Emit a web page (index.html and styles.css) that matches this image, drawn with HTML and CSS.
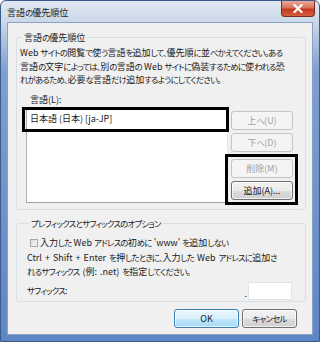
FILE: index.html
```html
<!DOCTYPE html>
<html lang="ja">
<head>
<meta charset="utf-8">
<link rel="stylesheet" href="styles.css">
</head>
<body>
<div class="window">
  <div class="titlebar">
    <span class="title">言語の優先順位</span>
    <span class="close"><svg width="10" height="9" viewBox="0 0 10 9"><path d="M1.5 1 L8.5 8 M8.5 1 L1.5 8" stroke="#fff" stroke-width="2.2" stroke-linecap="square"/></svg></span>
  </div>
  <div class="client">
    <fieldset class="group g1">
      <legend>言語の優先順位</legend>
      <p class="desc">Web サイトの閲覧で使う言語を追加して、優先順に並べかえてください。ある<br>言語の文字によっては、別の言語の Web サイトに偽装するために使われる恐<br>れがあるため、必要な言語だけ追加するようにしてください。</p>
      <div class="langs">
        <div class="listcol">
          <div class="lbl">言語(L):</div>
          <div class="listbox">
            <div class="item">日本語 (日本) [ja-JP]</div>
          </div>
        </div>
        <div class="btncol">
          <button class="btn dis">上へ(U)</button>
          <button class="btn dis">下へ(D)</button>
          <div class="mark">
            <button class="btn dis">削除(M)</button>
            <button class="btn">追加(A)...</button>
          </div>
        </div>
      </div>
    </fieldset>
    <fieldset class="group g2">
      <legend>プレフィックスとサフィックスのオプション</legend>
      <label class="chk"><span class="box"></span><span class="chk-text">入力した Web アドレスの初めに 'www' を追加しない</span></label>
      <p class="desc2">Ctrl + Shift + Enter を押したときに、入力した Web アドレスに追加さ<br>れるサフィックス (例: .net) を指定してください。</p>
      <div class="suffix">
        <span class="suffix-label">サフィックス:</span>
        <span class="dot">.</span>
        <span class="input"></span>
      </div>
    </fieldset>
    <div class="footer">
      <button class="btn ok">OK</button>
      <button class="btn cancel">キャンセル</button>
    </div>
  </div>
</div>
<script src="app.js"></script>
</body>
</html>
```

FILE: styles.css
```css
* { box-sizing: border-box; }
html, body { margin: 0; padding: 0; background: #fff; }
body {
  font-family: "Noto Sans CJK JP", "Noto Sans", sans-serif;
  font-size: 9px;
  color: #1a1a1a;
  font-feature-settings: "palt" 1;
}
.kana { font-size: 8.4px; letter-spacing: -0.75px; }
.window {
  width: 320px;
  height: 342px;
  display: flex;
  flex-direction: column;
  border: 1px solid #3a5a8a;
  border-radius: 6px 6px 0 0;
  background: linear-gradient(to bottom, #dfe7f1 0, #cbd8e8 21px, #7f9fcf 70px, #5f86c4 100%);
  padding: 0 6px 6px 6px;
}
.titlebar {
  height: 21px;
  display: flex;
  align-items: flex-start;
  justify-content: space-between;
}
.title { padding: 5px 0 0 0; line-height: 13px; color: #222; }
.close {
  width: 34px;
  height: 16px;
  margin-right: -2px;
  border: 1px solid #7a2a20;
  border-top: none;
  border-radius: 0 0 4px 4px;
  background: linear-gradient(to bottom, #e9a99b 0, #d9745e 45%, #c2391e 55%, #d45f3f 100%);
  display: flex;
  align-items: center;
  justify-content: center;
}
.client {
  flex: 1;
  background: #f0f0f0;
  border: 1px solid #8aa3c6;
  padding: 8px 6px 0 8px;
  display: flex;
  flex-direction: column;
}
.group {
  margin: 0;
  border: 1px solid #d5dfe5;
  border-radius: 3px;
  padding: 0;
  min-width: 0;
}
.group legend {
  padding: 0 2px;
  margin-left: 2px;
  color: #222;
  line-height: 12px;
}
.g1 { height: 179px; padding: 0 0 0 3px; }
.desc {
  margin: 2px 0 0 0;
  line-height: 13.5px;
  white-space: nowrap;
}
.langs {
  display: flex;
  margin-top: 7px;
  margin-left: 6px;
  gap: 3px;
}
.lbl { padding-left: 4px; line-height: 12px; height: 13px; }
.listbox {
  width: 202px;
  height: 96px;
  background: #fff;
  border: 1px solid #abadb3;
  border-right-color: #e3e9ef;
  border-bottom-color: #a0a0a0;
}
.item {
  margin: -1px -2px 0 -5px;
  height: 25px;
  border: 3px solid #000;
  padding-left: 5px;
  line-height: 17px;
}
.btncol {
  display: flex;
  flex-direction: column;
  padding-top: 17px;
  gap: 3px;
}
.btn {
  font-family: inherit;
  font-size: 9px;
  font-feature-settings: "palt" 1;
  width: 62px;
  height: 19px;
  padding: 0;
  border: 1px solid #707070;
  border-radius: 3px;
  color: #1a1a1a;
  background: linear-gradient(to bottom, #f2f2f2 0, #ebebeb 50%, #dddddd 51%, #cfcfcf 100%);
  box-shadow: inset 0 0 0 1px rgba(255,255,255,0.7);
}
.btn.dis {
  color: #a3a3a3;
  background: #f4f4f4;
  border-color: #c3c6c8;
  box-shadow: none;
}
.mark {
  margin: -1px 0 0 -6px;
  width: 73px;
  border: 3px solid #000;
  padding: 2px 0 2px 3px;
  display: flex;
  flex-direction: column;
  gap: 3px;
}
.g2 { margin-top: 7px; height: 85px; padding: 0 0 0 10px; }
.chk {
  display: flex;
  align-items: center;
  margin-top: 6px;
  margin-left: 3px;
  gap: 2px;
  line-height: 13px;
  white-space: nowrap;
}
.box {
  width: 8px;
  height: 8px;
  border: 1px solid #a8a8a8;
  background: linear-gradient(135deg, #dcdcdc, #f8f8f8);
}
.desc2 {
  margin: 2px 0 0 0;
  line-height: 12.6px;
  white-space: nowrap;
  word-spacing: 1px;
}
.suffix {
  display: flex;
  align-items: center;
  margin-top: 3px;
}
.suffix-label { flex: 1; }
.dot { margin-right: 1px; padding-top: 6px; }
.input {
  width: 44px;
  height: 18px;
  background: #fff;
  border: 1px solid #e0e3e8;
  margin-right: 13px;
}
.footer {
  display: flex;
  justify-content: flex-end;
  gap: 3px;
  margin-top: 7px;
  padding-right: 9px;
}
.ok {
  width: 65px;
  border-color: #3c7fb1;
  background: linear-gradient(to bottom, #eaf6fd 0, #d9f0fc 50%, #bee6fd 51%, #a7d9f5 100%);
}
.cancel { width: 55px; }
```

FILE: app.js
```js
(function () {
  var re = /[\u3001-\u3002\u3041-\u309F\u30A0-\u30FF]+/g;
  var walker = document.createTreeWalker(document.body, NodeFilter.SHOW_TEXT, null);
  var nodes = [];
  while (walker.nextNode()) nodes.push(walker.currentNode);
  nodes.forEach(function (node) {
    var text = node.nodeValue;
    if (!re.test(text)) return;
    re.lastIndex = 0;
    var frag = document.createDocumentFragment();
    var last = 0, m;
    while ((m = re.exec(text)) !== null) {
      if (m.index > last) frag.appendChild(document.createTextNode(text.slice(last, m.index)));
      var span = document.createElement('span');
      span.className = 'kana';
      span.textContent = m[0];
      frag.appendChild(span);
      last = m.index + m[0].length;
    }
    if (last < text.length) frag.appendChild(document.createTextNode(text.slice(last)));
    node.parentNode.replaceChild(frag, node);
  });
})();
```
